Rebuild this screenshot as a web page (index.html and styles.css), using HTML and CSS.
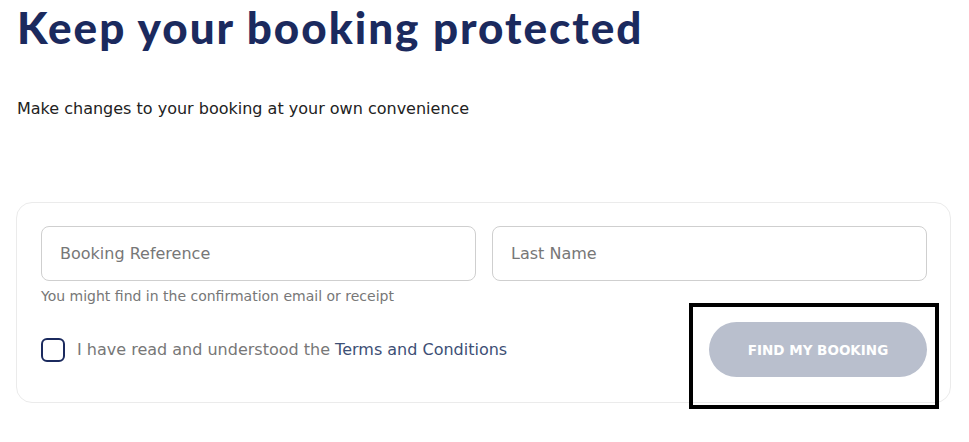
FILE: index.html
```html
<!DOCTYPE html>
<html lang="en">
<head>
  <meta charset="UTF-8" />
  <meta name="viewport" content="width=device-width, initial-scale=1.0"/>
  <title>Manage Booking</title>
  <link rel="stylesheet" href="styles.css">
</head>
<body>
  <h1 class="title">Keep your booking protected</h1>
  <p class="lead">Make changes to your booking at your own convenience</p>

  <form class="card" id="findForm">
    <div class="fields">
      <div class="field">
        <input type="text" class="input" placeholder="Booking Reference" />
        <span class="hint">You might find in the confirmation email or receipt</span>
      </div>
      <div class="field">
        <input type="text" class="input" placeholder="Last Name" />
      </div>
    </div>
    <div class="actions">
      <label class="check">
        <span class="box"></span>
        <span>I have read and understood the <a href="#" class="link">Terms and Conditions</a></span>
      </label>
      <div class="btn-wrap">
        <button type="submit" class="btn" disabled>Find my booking</button>
        <div class="highlight"></div>
      </div>
    </div>
  </form>
</body>
</html>
```

FILE: styles.css
```css
body {
  margin: 0;
  padding: 0 18px 40px 16px;
  font-family: "DejaVu Sans", sans-serif;
  background: #fff;
  color: #222;
}
.title {
  margin: 0;
  padding: 0 0 0 1px;
  font-family: Lato, sans-serif;
  font-size: 44px;
  line-height: 54px;
  font-weight: 900;
  color: #1b2a5e;
  letter-spacing: 2px;
}
.lead {
  margin: 44px 0 0 1px;
  font-size: 16px;
  line-height: 22px;
  color: #222;
}
.card {
  margin-top: 82px;
  border: 1px solid #ebebeb;
  border-radius: 16px;
  padding: 23px 23px 25px 24px;
}
.fields { display: grid; grid-template-columns: 1fr 1fr; gap: 16px; }
.field { display: flex; flex-direction: column; }
.input {
  height: 55px;
  box-sizing: border-box;
  border: 1px solid #cfcfcf;
  border-radius: 8px;
  padding: 0 18px;
  font: 16px "DejaVu Sans", sans-serif;
  color: #333;
}
.input::placeholder { color: #777; }
.hint { margin-top: 6px; font-size: 14px; line-height: 18px; color: #777; }
.actions {
  display: flex;
  justify-content: space-between;
  align-items: center;
  margin-top: 17px;
}
.check {
  display: flex;
  align-items: center;
  gap: 12px;
  font-size: 16px;
  color: #777;
}
.box {
  width: 20px;
  height: 20px;
  border: 2px solid #1b2a5e;
  border-radius: 6px;
}
.link { color: #3d4f75; text-decoration: none; }
.btn-wrap { position: relative; }
.btn {
  display: block;
  width: 218px;
  height: 55px;
  border: none;
  border-radius: 28px;
  background: #b9bfcd;
  color: #fff;
  font: 700 13.5px "DejaVu Sans", sans-serif;
  text-transform: uppercase;
}
.highlight {
  position: absolute;
  left: -20px;
  top: -19px;
  width: 250px;
  height: 106px;
  box-sizing: border-box;
  border: 4px solid #000;
  z-index: 2;
}
```
